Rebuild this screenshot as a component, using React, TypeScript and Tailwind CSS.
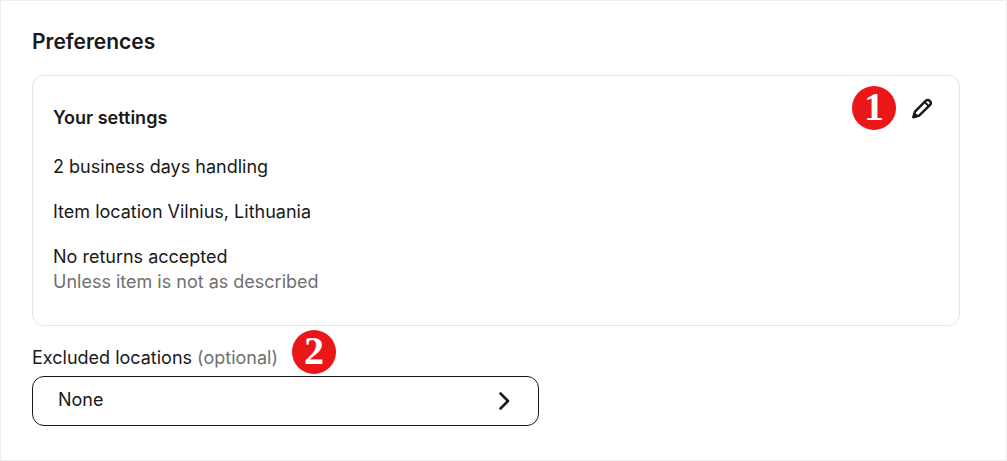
interface StepBadgeProps {
  step: number
}

function StepBadge({ step }: StepBadgeProps) {
  return (
    <span className="flex h-11 w-11 shrink-0 items-center justify-center rounded-full bg-[#eb1618] pb-[2px] font-['Liberation_Serif',serif] text-[40px] font-bold leading-none text-white">
      {step}
    </span>
  )
}

function PencilIcon() {
  return (
    <svg
      viewBox="0 0 24 24"
      className="h-6 w-6"
      fill="none"
      stroke="currentColor"
      strokeWidth="2.5"
      strokeLinejoin="round"
      strokeLinecap="round"
      aria-hidden="true"
    >
      <path d="M3.3 21.2 5 15.6 15.9 4.7a2.5 2.5 0 0 1 3.6 0l.6.6a2.5 2.5 0 0 1 0 3.6L9.1 19.6z" />
      <path d="m15.2 6.6 3.2 3.2" strokeWidth="2" />
      <path d="m3.3 21.2 1.2-4.8 3.6 3.6z" fill="currentColor" strokeWidth="1" />
    </svg>
  )
}

function ChevronIcon() {
  return (
    <svg
      viewBox="0 0 12 20"
      className="h-5 w-3"
      fill="none"
      stroke="currentColor"
      strokeWidth="2.6"
      strokeLinejoin="round"
      strokeLinecap="round"
      aria-hidden="true"
    >
      <path d="m2.5 2.5 7.5 7.5-7.5 7.5" />
    </svg>
  )
}

export default function App() {
  return (
    <main className="border border-[#eeeeee] bg-white pb-[34px] pl-[31px] pr-[46px] pt-7 font-['Inter',sans-serif] text-lg leading-[25px] text-[#191919]">
      <h1 className="text-[21px] font-semibold leading-[26px]">Preferences</h1>

      {/* Settings summary */}
      <section className="mt-5 flex items-start justify-between rounded-xl border border-[#e5e5e5] px-5 pb-[31px]">
        <div className="pt-[29px]">
          <h2 className="font-semibold">Your settings</h2>
          <div className="mt-6 flex flex-col gap-5">
            <p>2 business days handling</p>
            <p>Item location Vilnius, Lithuania</p>
            <div>
              <p>No returns accepted</p>
              <p className="text-[#707070]">Unless item is not as described</p>
            </div>
          </div>
        </div>
        <div className="flex items-center gap-[14px] pr-[5px] pt-[10px]">
          <StepBadge step={1} />
          <button type="button" aria-label="Edit settings">
            <PencilIcon />
          </button>
        </div>
      </section>

      {/* Excluded locations */}
      <div className="mt-1 flex items-center gap-[14px]">
        <label htmlFor="excluded-locations" className="pt-[10px]">
          Excluded locations <span className="text-[#707070]">(optional)</span>
        </label>
        <StepBadge step={2} />
      </div>
      <button
        id="excluded-locations"
        type="button"
        className="mt-[2px] flex h-[50px] w-full max-w-[507px] items-center justify-between rounded-xl border border-[#191919] pl-[25px] pr-7 text-left"
      >
        <span className="pb-1">None</span>
        <ChevronIcon />
      </button>
    </main>
  )
}
